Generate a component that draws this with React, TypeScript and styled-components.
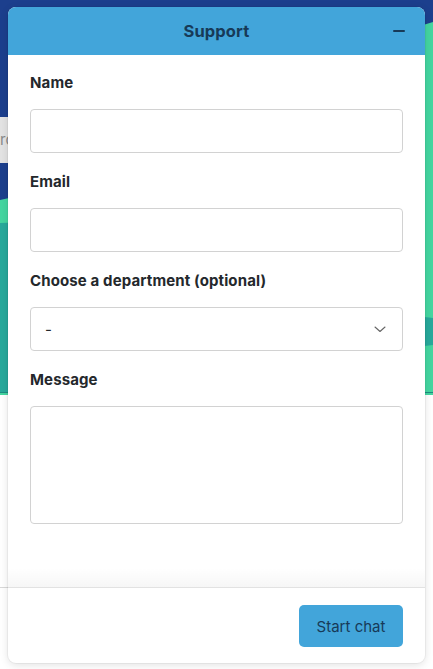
import React from 'react'
import styled, { createGlobalStyle } from 'styled-components'

const GlobalStyle = createGlobalStyle`
  html, body {
    margin: 0;
    padding: 0;
    background: #ffffff;
  }
  body {
    font-family: Inter, 'Liberation Sans', Arial, sans-serif;
    -webkit-font-smoothing: antialiased;
  }
  * {
    box-sizing: border-box;
  }
`

// page sitting behind the widget
const Page = styled.div`
  position: relative;
  width: 433px;
  height: 669px;
  overflow: hidden;
  background: #ffffff;
`

const Hero = styled.div`
  position: relative;
  height: 395px;
  background: #1c3f8d;
`

const Waves = styled.svg`
  display: block;
  position: absolute;
  left: 0;
  top: 0;
`

const SearchBar = styled.div`
  position: absolute;
  left: 0;
  top: 117px;
  width: 200px;
  height: 46px;
  background: #e3e3e3;
  color: #8a8a8a;
  font-size: 15px;
  line-height: 46px;
`

const PageRule = styled.div`
  position: absolute;
  left: 0;
  top: 587px;
  width: 40px;
  height: 1px;
  background: #d8d8d8;
`

const Widget = styled.div`
  position: absolute;
  top: 7px;
  left: 8px;
  width: 417px;
  height: 656px;
  display: flex;
  flex-direction: column;
  background: #ffffff;
  border-radius: 8px;
  overflow: hidden;
  box-shadow: 0 0 0 1px rgba(0, 0, 0, 0.04), 0 2px 8px rgba(0, 0, 0, 0.12);
`

const Header = styled.div`
  position: relative;
  height: 48px;
  flex: none;
  display: flex;
  align-items: center;
  justify-content: center;
  background: #42a5da;
  color: #173a58;
  font-size: 16.5px;
  font-weight: 700;
  letter-spacing: 0.1px;
`

const MinimizeButton = styled.button`
  position: absolute;
  right: 16px;
  top: 50%;
  transform: translateY(-50%);
  width: 20px;
  height: 20px;
  padding: 0;
  border: none;
  background: transparent;
  display: flex;
  align-items: center;
  justify-content: center;
  cursor: pointer;

  &::after {
    content: '';
    width: 12px;
    height: 2px;
    border-radius: 1px;
    background: #173a58;
  }
`

const Body = styled.form`
  flex: 1;
  padding: 18px 22px 0;
`

const Field = styled.div`
  display: flex;
  flex-direction: column;
  margin-bottom: 19px;
`

const Label = styled.label`
  font-size: 15px;
  line-height: 20px;
  font-weight: 700;
  letter-spacing: 0.12px;
  color: #24282c;
  margin-bottom: 16px;
`

const TextInput = styled.input`
  height: 44px;
  width: 100%;
  border: 1px solid #d2d2d2;
  border-radius: 4px;
  padding: 0 14px;
  font: inherit;
  font-size: 15px;
  background: #fff;
  outline: none;
`

const SelectBox = styled.div`
  position: relative;
  height: 44px;
  display: flex;
  align-items: center;
  justify-content: space-between;
  border: 1px solid #d2d2d2;
  border-radius: 4px;
  padding: 0 16px 0 14px;
  font-size: 15px;
  color: #24282c;
`

const TextArea = styled.textarea`
  height: 118px;
  width: 100%;
  border: 1px solid #d2d2d2;
  border-radius: 4px;
  padding: 10px 14px;
  font: inherit;
  font-size: 15px;
  resize: none;
  outline: none;
`

const Footer = styled.div`
  position: relative;
  flex: none;
  height: 76px;
  border-top: 1px solid #e2e2e2;
  display: flex;
  justify-content: flex-end;
  padding: 17px 22px 0;

  &::before {
    content: '';
    position: absolute;
    left: 0;
    right: 0;
    top: -20px;
    height: 19px;
    background: linear-gradient(to bottom, rgba(0, 0, 0, 0), rgba(0, 0, 0, 0.035));
  }
`

const StartButton = styled.button`
  height: 42px;
  width: 104px;
  border: none;
  border-radius: 5px;
  background: #42a5da;
  color: #173a58;
  font: inherit;
  font-size: 15px;
  font-weight: 400;
  cursor: pointer;
`

const Chevron = () => (
  <svg width="12" height="7" viewBox="0 0 12 7" fill="none">
    <polyline points="1,1 6,5.5 11,1" stroke="#666" strokeWidth="1.1" strokeLinejoin="round" strokeLinecap="round" />
  </svg>
)

export default function App() {
  return (
    <Page>
      <GlobalStyle />
      <Hero>
        <Waves width="433" height="395" viewBox="0 0 433 395">
          <path d="M0 200 C 150 170, 300 60, 433 22 L433 395 L0 395 Z" fill="#44d6a0" />
          <path d="M0 223 C 120 215, 260 300, 433 318 L433 345 C 300 360, 150 395, 0 392 Z" fill="#27a99b" />
          <rect x="0" y="392" width="433" height="1" fill="#1e8b80" />
        </Waves>
        <SearchBar>ro</SearchBar>
      </Hero>
      <PageRule />

      <Widget>
        <Header>
          Support
          <MinimizeButton type="button" aria-label="Minimize" />
        </Header>
        <Body>
          <Field>
            <Label>Name</Label>
            <TextInput type="text" />
          </Field>
          <Field>
            <Label>Email</Label>
            <TextInput type="email" />
          </Field>
          <Field>
            <Label>Choose a department (optional)</Label>
            <SelectBox>
              <span>-</span>
              <Chevron />
            </SelectBox>
          </Field>
          <Field>
            <Label>Message</Label>
            <TextArea />
          </Field>
        </Body>
        <Footer>
          <StartButton type="button">Start chat</StartButton>
        </Footer>
      </Widget>
    </Page>
  )
}
